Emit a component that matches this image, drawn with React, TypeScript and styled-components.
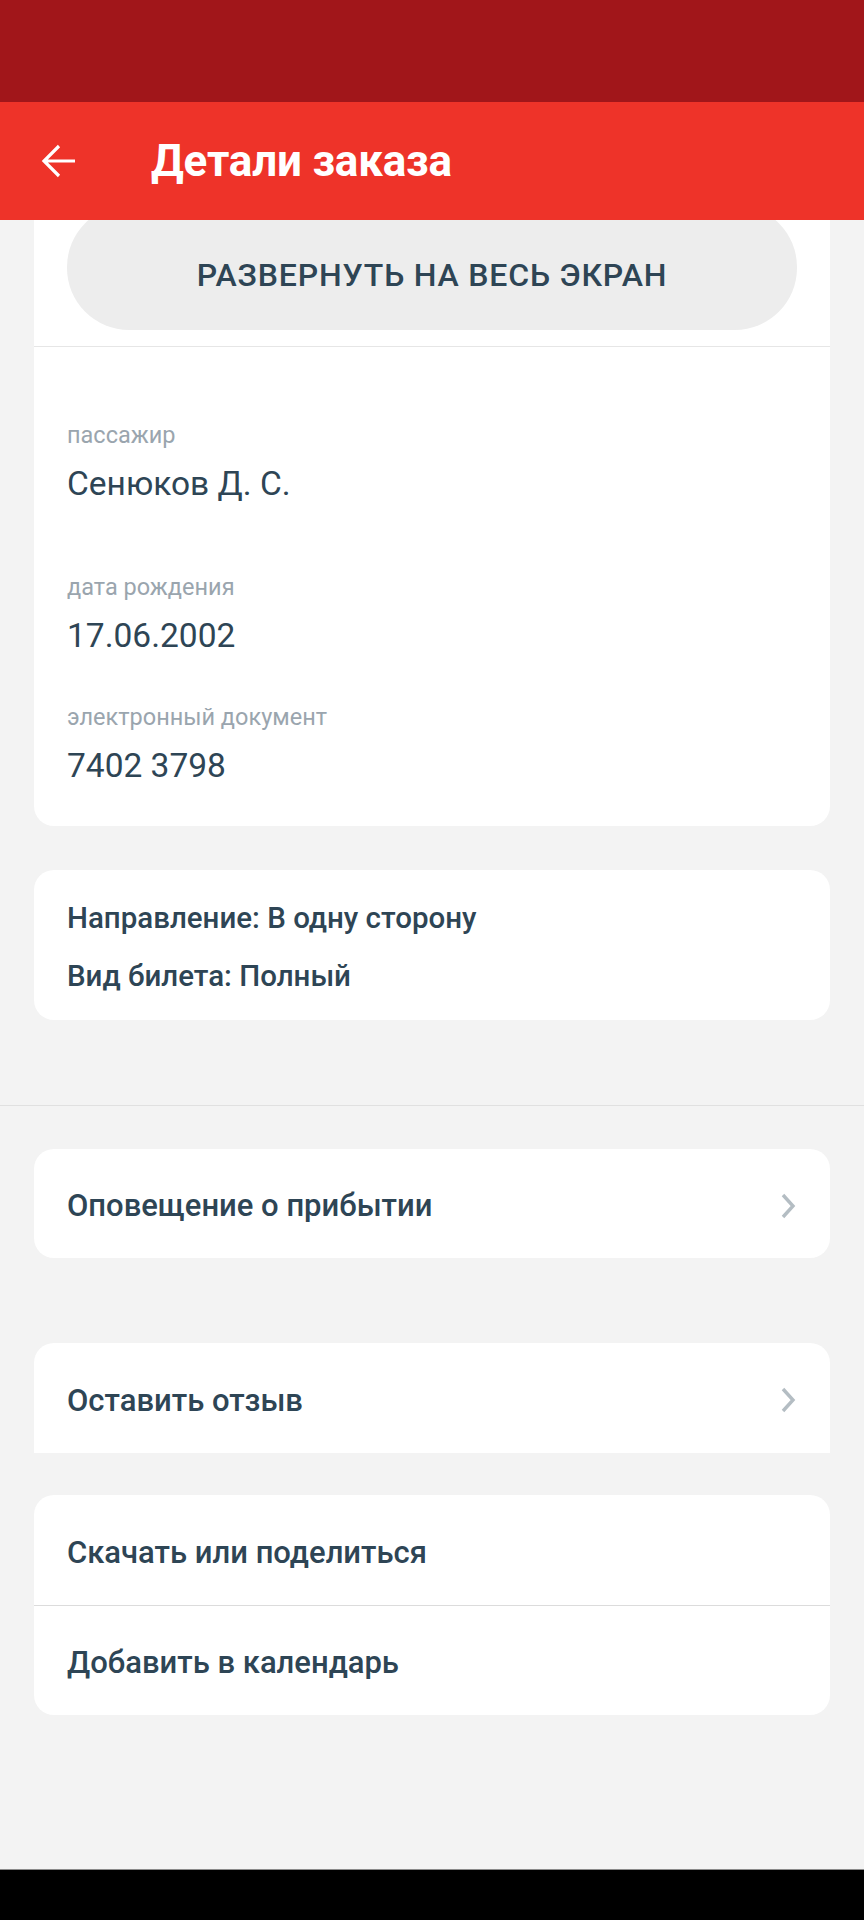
import React from "react";
import styled, { createGlobalStyle } from "styled-components";

const GlobalStyle = createGlobalStyle`
  html, body {
    margin: 0;
    padding: 0;
    background: #f3f3f3;
    font-family: Roboto, "Noto Sans", "Liberation Sans", sans-serif;
  }
  * { box-sizing: border-box; }
`;

const TEXT = "#2e4555";

const Screen = styled.div`
  width: 864px;
  height: 1920px;
  display: flex;
  flex-direction: column;
  background: #f3f3f3;
  overflow: hidden;
`;

const StatusBar = styled.div`
  height: 102px;
  flex-shrink: 0;
  background: #a1161a;
`;

const Toolbar = styled.header`
  height: 118px;
  flex-shrink: 0;
  background: #ee3329;
  display: flex;
  align-items: center;
  padding-left: 41px;
  position: relative;
  z-index: 2;
`;

const BackButton = styled.button`
  width: 36px;
  height: 36px;
  padding: 0;
  border: 0;
  background: none;
  display: flex;
  align-items: center;
  justify-content: center;
  cursor: pointer;
`;

const Title = styled.h1`
  margin: 0 0 0 74px;
  font-size: 44px;
  font-weight: 700;
  color: #ffffff;
  letter-spacing: -0.2px;
  line-height: 52px;
`;

const Viewport = styled.main`
  flex: 1;
  overflow: hidden;
`;

const Scroller = styled.div`
  display: flex;
  flex-direction: column;
  margin-top: -35px;
`;

const Card = styled.section<{ $gap?: number; $flatBottom?: boolean }>`
  margin: ${(p) => p.$gap ?? 0}px 34px 0;
  background: #ffffff;
  border-radius: ${(p) => (p.$flatBottom ? "20px 20px 0 0" : "20px")};
  overflow: hidden;
`;

const ButtonSection = styled.div`
  padding: 20px 33px 16px;
  border-bottom: 1px solid #e6e6e6;
`;

const FullscreenButton = styled.button`
  width: 100%;
  height: 125px;
  padding: 15px 0 0;
  border: 0;
  border-radius: 62px;
  background: #ededed;
  color: ${TEXT};
  font-family: Roboto, "Noto Sans", sans-serif;
  font-size: 32px;
  font-weight: 500;
  letter-spacing: 0.8px;
  cursor: pointer;
`;

const PassengerSection = styled.div`
  padding: 74px 33px 39px;
  display: flex;
  flex-direction: column;
`;

const Field = styled.div<{ $after: number }>`
  display: flex;
  flex-direction: column;
  margin-bottom: ${(p) => p.$after}px;
`;

const FieldLabel = styled.span`
  font-size: 23.5px;
  line-height: 28px;
  color: #9aa5ae;
`;

const FieldValue = styled.span`
  margin-top: 14px;
  font-size: 33.5px;
  line-height: 42px;
  color: ${TEXT};
`;

const InfoCardBody = styled.div`
  padding: 30px 33px 26px;
  display: flex;
  flex-direction: column;
  gap: 22px;
`;

const InfoLine = styled.div`
  font-size: 29.5px;
  line-height: 36px;
  font-weight: 500;
  color: ${TEXT};
`;

const SectionDivider = styled.hr`
  margin: 85px 0 43px;
  border: 0;
  height: 1px;
  background: #e0e0e0;
`;

const MenuRow = styled.div<{ $height: number }>`
  height: ${(p) => p.$height}px;
  display: flex;
  align-items: center;
  justify-content: space-between;
  padding: 4px 34px 0 33px;
  font-size: 31px;
  font-weight: 500;
  color: ${TEXT};
  cursor: pointer;
`;

const RowDivider = styled.div`
  height: 1px;
  background: #dcdcdc;
`;

const NavBar = styled.div`
  height: 51px;
  flex-shrink: 0;
  background: #000000;
  border-top: 1px solid #8a8a8a;
`;

const ArrowIcon = () => (
  <svg width="36" height="36" viewBox="0 0 36 36" fill="none">
    <path
      d="M34 18H3M18 3L3 18L18 33"
      stroke="#ffffff"
      strokeWidth="3.2"
      strokeLinecap="butt"
      strokeLinejoin="miter"
    />
  </svg>
);

const Chevron = () => (
  <svg width="16" height="26" viewBox="0 0 16 26" fill="none">
    <path d="M3 2L13 13L3 24" stroke="#b4bdc3" strokeWidth="3.4" />
  </svg>
);

const fields = [
  { label: "пассажир", value: "Сенюков Д. С.", after: 68 },
  { label: "дата рождения", value: "17.06.2002", after: 46 },
  { label: "электронный документ", value: "7402 3798", after: 0 },
];

export default function App() {
  return (
    <>
      <GlobalStyle />
      <Screen>
        <StatusBar />
        <Toolbar>
          <BackButton aria-label="Назад">
            <ArrowIcon />
          </BackButton>
          <Title>Детали заказа</Title>
        </Toolbar>
        <Viewport>
          <Scroller>
            <Card>
              <ButtonSection>
                <FullscreenButton>РАЗВЕРНУТЬ НА ВЕСЬ ЭКРАН</FullscreenButton>
              </ButtonSection>
              <PassengerSection>
                {fields.map((f) => (
                  <Field key={f.label} $after={f.after}>
                    <FieldLabel>{f.label}</FieldLabel>
                    <FieldValue>{f.value}</FieldValue>
                  </Field>
                ))}
              </PassengerSection>
            </Card>

            <Card $gap={44}>
              <InfoCardBody>
                <InfoLine>Направление: В одну сторону</InfoLine>
                <InfoLine>Вид билета: Полный</InfoLine>
              </InfoCardBody>
            </Card>

            <SectionDivider />

            <Card>
              <MenuRow $height={109}>
                Оповещение о прибытии
                <Chevron />
              </MenuRow>
            </Card>

            <Card $gap={85} $flatBottom>
              <MenuRow $height={110}>
                Оставить отзыв
                <Chevron />
              </MenuRow>
            </Card>

            <Card $gap={42}>
              <MenuRow $height={110}>Скачать или поделиться</MenuRow>
              <RowDivider />
              <MenuRow $height={109}>Добавить в календарь</MenuRow>
            </Card>
          </Scroller>
        </Viewport>
        <NavBar />
      </Screen>
    </>
  );
}
